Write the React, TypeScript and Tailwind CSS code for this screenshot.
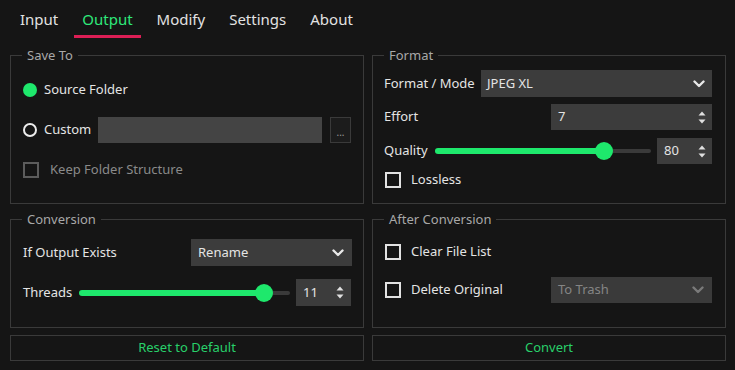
import React from "react";

function Chevron({ dim }: { dim?: boolean }) {
  return (
    <svg width="12" height="8" viewBox="0 0 12 8" className="shrink-0">
      <polyline
        points="1.5,1.5 6,6 10.5,1.5"
        fill="none"
        stroke={dim ? "#7a7a7a" : "#e8e8e8"}
        strokeWidth="2.4"
        strokeLinecap="round"
        strokeLinejoin="round"
      />
    </svg>
  );
}

function SpinArrows() {
  return (
    <svg width="8" height="13" viewBox="0 0 8 13" className="shrink-0">
      <path d="M4 0.5 L7.5 4.5 L0.5 4.5 Z" fill="#e0e0e0" />
      <path d="M0.5 8.5 L7.5 8.5 L4 12.5 Z" fill="#e0e0e0" />
    </svg>
  );
}

function Check({ disabled }: { disabled?: boolean }) {
  return (
    <div
      className={
        disabled
          ? "w-[16px] h-[16px] border-2 border-[#5c5c5c] shrink-0"
          : "w-[16px] h-[16px] border-2 border-[#e2e2e2] shrink-0"
      }
    />
  );
}

function Legend({ children, className }: { children: React.ReactNode; className: string }) {
  return (
    <legend className={`px-[5px] text-[13px] leading-[16px] text-[#a8a8a8] ${className}`}>
      {children}
    </legend>
  );
}

function Slider({ width, fill, knob }: { width: string; fill: string; knob: string }) {
  return (
    <div className={`relative h-[18px] shrink-0 ${width}`}>
      <div className="absolute left-0 right-0 top-[7px] h-[4px] rounded-full bg-[#3a3a3a]" />
      <div className={`absolute left-0 top-[6px] h-[6px] rounded-full bg-[#1ee86c] ${fill}`} />
      <div className={`absolute top-[0px] w-[18px] h-[18px] rounded-full bg-[#1ee86c] ${knob}`} />
    </div>
  );
}

export default function App() {
  const tabs = ["Input", "Output", "Modify", "Settings", "About"];
  return (
    <div
      className="w-[735px] h-[370px] bg-[#151515] overflow-hidden text-[#e4e4e4]"
      style={{ fontFamily: "'Noto Sans', 'Open Sans', sans-serif" }}
    >
      {/* Tabs */}
      <div className="flex h-[47px] pl-[12px] gap-[8px]">
        {tabs.map((t) => (
          <div
            key={t}
            className={
              t === "Output"
                ? "h-[38px] px-[8px] pt-[4px] flex items-center text-[15px] text-[#2ee87a] border-b-[3px] border-[#dc1e55]"
                : "h-[38px] px-[8px] pt-[4px] flex items-center text-[15px] text-[#e2e2e2] border-b-[3px] border-transparent"
            }
          >
            {t}
          </div>
        ))}
      </div>

      <div className="flex gap-[8px] pl-[10px]">
        {/* Left column */}
        <div className="w-[354px] flex flex-col">
          <fieldset className="h-[157px] border border-[#3a3a3a]">
            <Legend className="ml-[11px]">Save To</Legend>
            <div className="px-[12px] pt-[14px]">
              <div className="h-[26px] flex items-center">
                <div className="w-[14px] h-[14px] rounded-full bg-[#1ee86c]" />
                <span className="ml-[7px] text-[13px]">Source Folder</span>
              </div>
              <div className="mt-[14px] h-[26px] flex items-center">
                <div className="w-[75px] flex items-center shrink-0">
                  <div className="w-[14px] h-[14px] rounded-full border-[2.5px] border-[#ececec]" />
                  <span className="ml-[7px] text-[13px]">Custom</span>
                </div>
                <div className="flex-1 h-[26px] bg-[#444444]" />
                <div className="ml-[8px] w-[21px] h-[26px] border border-[#3a3a3a] bg-[#1c1c1c] flex items-end justify-center pb-[5px] text-[10px] leading-[10px] text-[#9a9a9a]">
                  ...
                </div>
              </div>
              <div className="mt-[14px] h-[26px] flex items-center">
                <Check disabled />
                <span className="ml-[11px] text-[13px] text-[#8a8a8a]">Keep Folder Structure</span>
              </div>
            </div>
          </fieldset>

          <fieldset className="mt-[7px] h-[117px] border border-[#3a3a3a]">
            <Legend className="ml-[11px]">Conversion</Legend>
            <div className="pl-[12px] pr-[11px] pt-[12px]">
              <div className="h-[27px] flex items-center">
                <span className="text-[13px]">If Output Exists</span>
                <div className="ml-auto w-[161px] h-[27px] bg-[#3c3c3c] flex items-center pl-[7px] pr-[8px]">
                  <span className="text-[13px] flex-1">Rename</span>
                  <Chevron />
                </div>
              </div>
              <div className="mt-[13px] h-[27px] flex items-center">
                <span className="text-[13px] w-[56px] shrink-0">Threads</span>
                <Slider width="w-[211px]" fill="w-[185px]" knob="left-[176px]" />
                <div className="ml-[6px] w-[55px] h-[27px] bg-[#3c3c3c] flex items-center pl-[7px] pr-[7px]">
                  <span className="text-[13px] flex-1">11</span>
                  <SpinArrows />
                </div>
              </div>
            </div>
          </fieldset>

          <div className="mt-[7px] h-[26px] border border-[#3a3a3a] flex items-center justify-center text-[13px] text-[#28d06a]">
            Reset to Default
          </div>
        </div>

        {/* Right column */}
        <div className="w-[354px] flex flex-col">
          <fieldset className="h-[157px] border border-[#3a3a3a]">
            <Legend className="ml-[11px]">Format</Legend>
            <div className="pl-[11px] pr-[13px] pt-[7px]">
              <div className="h-[27px] flex items-center">
                <span className="text-[13px]">Format / Mode</span>
                <div className="ml-auto w-[231px] h-[27px] bg-[#3c3c3c] flex items-center pl-[6px] pr-[7px]">
                  <span className="text-[13px] flex-1">JPEG XL</span>
                  <Chevron />
                </div>
              </div>
              <div className="mt-[7px] h-[26px] flex items-center">
                <span className="text-[13px]">Effort</span>
                <div className="ml-auto w-[161px] h-[26px] bg-[#3c3c3c] flex items-center pl-[7px] pr-[6px]">
                  <span className="text-[13px] flex-1">7</span>
                  <SpinArrows />
                </div>
              </div>
              <div className="mt-[8px] h-[26px] flex items-center">
                <span className="text-[13px] w-[51px] shrink-0">Quality</span>
                <Slider width="w-[216px]" fill="w-[169px]" knob="left-[160px]" />
                <div className="ml-auto w-[55px] h-[26px] bg-[#3c3c3c] flex items-center pl-[7px] pr-[6px]">
                  <span className="text-[13px] flex-1">80</span>
                  <SpinArrows />
                </div>
              </div>
              <div className="mt-[6px] h-[20px] flex items-center">
                <div className="ml-[1px]">
                  <Check />
                </div>
                <span className="ml-[10px] text-[13px]">Lossless</span>
              </div>
            </div>
          </fieldset>

          <fieldset className="mt-[7px] h-[117px] border border-[#3a3a3a]">
            <Legend className="ml-[11px]">After Conversion</Legend>
            <div className="pl-[11px] pr-[13px] pt-[14px]">
              <div className="h-[22px] flex items-center">
                <div className="ml-[1px]">
                  <Check />
                </div>
                <span className="ml-[10px] text-[13px]">Clear File List</span>
              </div>
              <div className="mt-[14px] h-[26px] flex items-center">
                <div className="ml-[1px]">
                  <Check />
                </div>
                <span className="ml-[10px] text-[13px]">Delete Original</span>
                <div className="ml-auto w-[161px] h-[26px] bg-[#3a3a3a] flex items-center pl-[7px] pr-[8px]">
                  <span className="text-[13px] flex-1 text-[#858585]">To Trash</span>
                  <Chevron dim />
                </div>
              </div>
            </div>
          </fieldset>

          <div className="mt-[7px] h-[26px] border border-[#3a3a3a] flex items-center justify-center text-[13px] text-[#28d06a]">
            Convert
          </div>
        </div>
      </div>
    </div>
  );
}
